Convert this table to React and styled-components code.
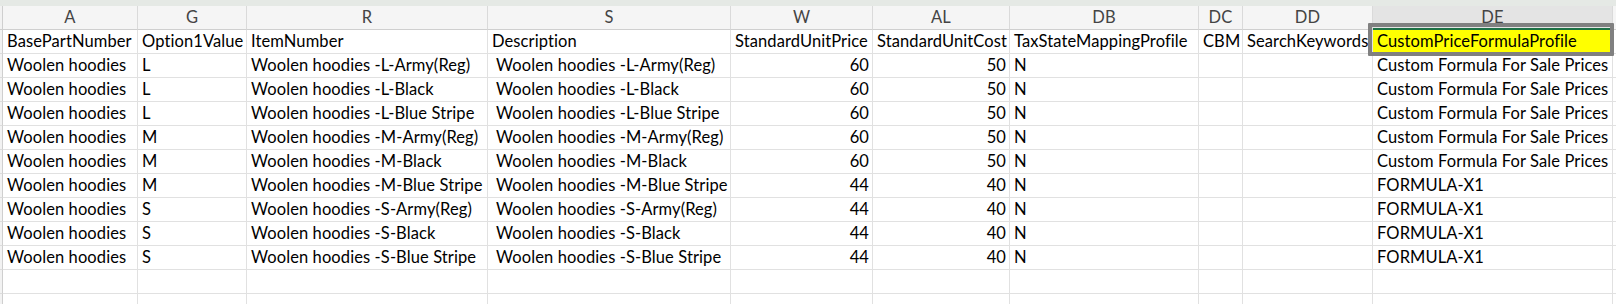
import React from 'react';
import styled, { createGlobalStyle } from 'styled-components';

const GlobalStyle = createGlobalStyle`
	html, body {
		margin: 0;
		padding: 0;
		background: #ffffff;
		overflow: hidden;
	}
	body {
		width: 1616px;
		height: 304px;
	}
`;

const COLUMNS = [
	{ letter: 'A', width: 135 },
	{ letter: 'G', width: 109 },
	{ letter: 'R', width: 241 },
	{ letter: 'S', width: 243 },
	{ letter: 'W', width: 142 },
	{ letter: 'AL', width: 137 },
	{ letter: 'DB', width: 189 },
	{ letter: 'DC', width: 44 },
	{ letter: 'DD', width: 130 },
	{ letter: 'DE', width: 240 }
];

// right-aligned (numeric) columns
const NUMERIC = [4, 5];

const HEADERS = [
	'BasePartNumber',
	'Option1Value',
	'ItemNumber',
	'Description',
	'StandardUnitPrice',
	'StandardUnitCost',
	'TaxStateMappingProfile',
	'CBM',
	'SearchKeywords',
	'CustomPriceFormulaProfile'
];

const VARIANTS = [
	['L', 'Army(Reg)', 60, 50, 'Custom Formula For Sale Prices'],
	['L', 'Black', 60, 50, 'Custom Formula For Sale Prices'],
	['L', 'Blue Stripe', 60, 50, 'Custom Formula For Sale Prices'],
	['M', 'Army(Reg)', 60, 50, 'Custom Formula For Sale Prices'],
	['M', 'Black', 60, 50, 'Custom Formula For Sale Prices'],
	['M', 'Blue Stripe', 44, 40, 'FORMULA-X1'],
	['S', 'Army(Reg)', 44, 40, 'FORMULA-X1'],
	['S', 'Black', 44, 40, 'FORMULA-X1'],
	['S', 'Blue Stripe', 44, 40, 'FORMULA-X1']
];

const ROWS = VARIANTS.map(([size, colour, price, cost, formula]) => {
	const item = `Woolen hoodies -${size}-${colour}`;
	return ['Woolen hoodies', size, item, ` ${item}`, String(price), String(cost), 'N', '', '', formula];
});

const EMPTY_ROWS = 2;

const Sheet = styled.div`
	position: relative;
	width: 1616px;
	height: 304px;
	overflow: hidden;
	font-family: Lato, 'Liberation Sans', sans-serif;
	font-size: 16.5px;
	letter-spacing: 0.1px;
`;

const TopStrip = styled.div`
	height: 6px;
	background: #e5e9e5;
`;

const Grid = styled.div`
	display: grid;
	grid-template-columns: 3px ${COLUMNS.map(c => `${c.width}px`).join(' ')} 1fr;
	grid-auto-rows: 24px;
`;

const Corner = styled.div`
	background: #f2f2f2;
	border-right: 1px solid #cfcfcf;
	border-bottom: 1px solid #cfcfcf;
`;

const RowHead = styled.div`
	background: #f2f2f2;
	border-right: 1px solid #cfcfcf;
	border-bottom: 1px solid #dcdcdc;
`;

const ColHead = styled.div`
	display: flex;
	align-items: center;
	justify-content: center;
	background: ${props => (props.active ? '#e4e4e4' : '#f5f5f5')};
	border-right: 1px solid #dadada;
	border-bottom: ${props => (props.active ? '2px solid #1e7145' : '1px solid #cfcfcf')};
	color: #444444;
	line-height: 23px;
	padding-bottom: ${props => (props.active ? '0' : '1px')};
`;

const Cell = styled.div`
	box-sizing: border-box;
	padding: 0 ${props => (props.numeric ? '3px' : '4px')} 0 4px;
	text-align: ${props => (props.numeric ? 'right' : 'left')};
	background: ${props => (props.highlight ? '#ffff00' : '#ffffff')};
	border-right: 1px solid #e1e1e1;
	border-bottom: 1px solid #e1e1e1;
	color: #000000;
	line-height: 23px;
	white-space: pre;
	overflow: hidden;
`;

const SelectionFrame = styled.div`
	position: absolute;
	left: 1368px;
	top: 23px;
	width: 246px;
	height: 33px;
	box-sizing: border-box;
	border: 4px solid #808080;
	border-radius: 1px;
	pointer-events: none;
`;

export default function App() {
	const lastCol = COLUMNS.length - 1;
	return (
		<>
			<GlobalStyle />
			<Sheet>
				<TopStrip />
				<Grid>
					<Corner />
					{COLUMNS.map((c, i) => (
						<ColHead key={c.letter} active={i === lastCol}>
							{c.letter}
						</ColHead>
					))}
					<ColHead />

					<RowHead />
					{HEADERS.map((h, i) => (
						<Cell key={h} highlight={i === lastCol}>
							{h}
						</Cell>
					))}
					<Cell />

					{ROWS.map((row, r) => (
						<React.Fragment key={r}>
							<RowHead />
							{row.map((value, i) => (
								<Cell key={i} numeric={NUMERIC.includes(i)}>
									{value}
								</Cell>
							))}
							<Cell />
						</React.Fragment>
					))}

					{Array.from({ length: EMPTY_ROWS }).map((_, r) => (
						<React.Fragment key={`empty-${r}`}>
							<RowHead />
							{COLUMNS.map(c => (
								<Cell key={c.letter} />
							))}
							<Cell />
						</React.Fragment>
					))}
				</Grid>
				<SelectionFrame />
			</Sheet>
		</>
	);
}
